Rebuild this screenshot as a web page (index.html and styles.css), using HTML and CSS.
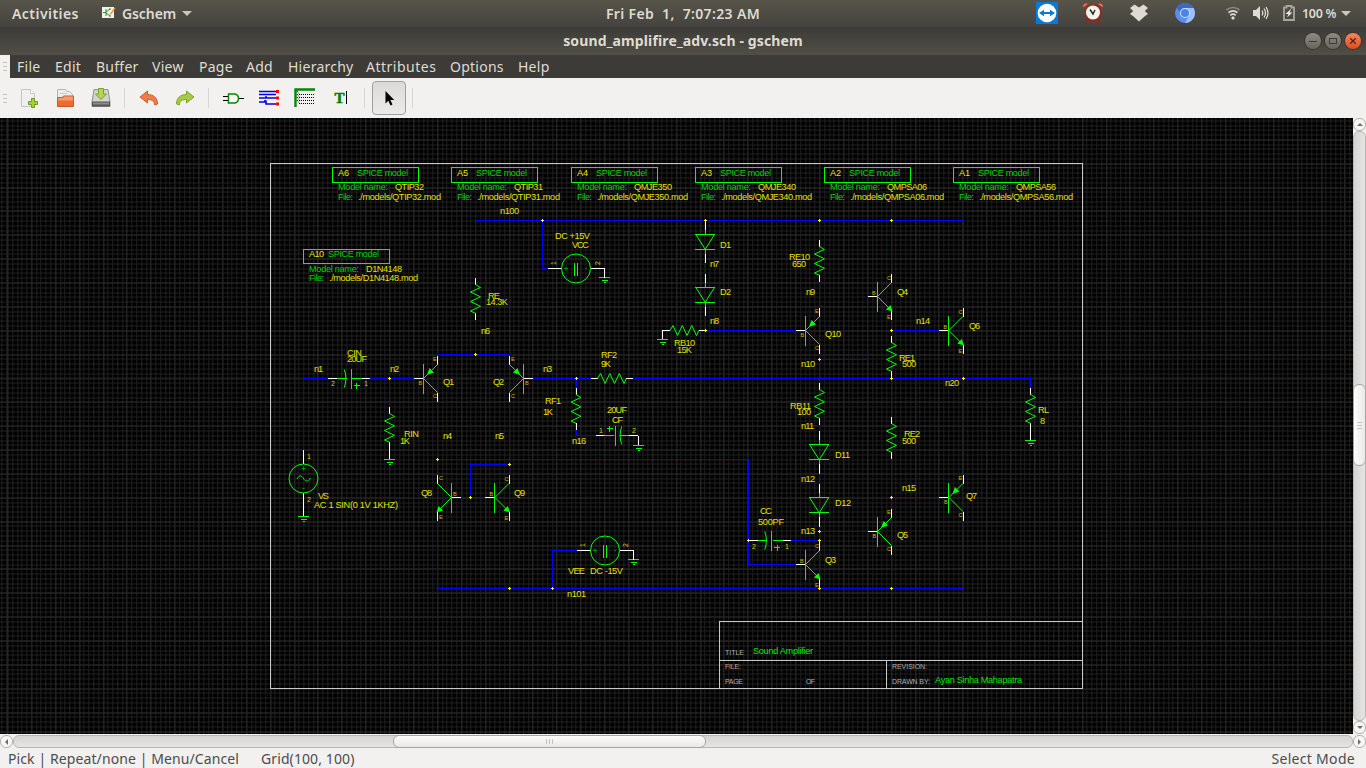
FILE: index.html
```html
<!DOCTYPE html>
<html lang="en">
<head>
<meta charset="utf-8">
<title>sound_amplifire_adv.sch - gschem</title>
<link rel="stylesheet" href="styles.css">
</head>
<body>
<header class="panel">
  <div class="panel-left">
    <span class="activities">Activities</span>
    <svg class="app-icon" width="14" height="14" viewBox="0 0 14 14"><rect x="0" y="1" width="12" height="11" fill="#f3f3ee"/><path d="M1 6.500h3M4 3v7M4 6l4-3M4 7l4 3M8 2v2M8 9v2" stroke="#3a8a2a" fill="none"/><path d="M7.500 8.500 12.500 1.500 13.500 2.500 9 8.500z" fill="#e88a2c"/></svg>
    <span class="app-name">Gschem</span>
    <i class="caret"></i>
  </div>
  <div class="clock">Fri Feb&nbsp; 1,&nbsp; 7:07:23 AM</div>
  <div class="panel-right">
    <svg class="ic-tv" width="22" height="22" viewBox="0 0 22 22"><rect width="22" height="22" fill="#0a7ad8"/><circle cx="11" cy="11" r="9.300" fill="#fff"/><path d="M3 11 8 7.800V10h6V7.800L19 11l-5 3.200V12H8v2.200z" fill="#0a7ad8"/></svg>
    <svg class="ic-alarm" width="22" height="22" viewBox="0 0 22 22"><path d="M1 6a3.800 3.800 0 0 1 5.500-4.500zM21 6a3.800 3.800 0 0 0-5.500-4.500z" fill="#e58a78" stroke="#a83524"/><path d="M5 17 4 21h3l2-2M17 17l1 4h-3l-2-2" fill="#8c2a1b"/><circle cx="11" cy="10.500" r="8.500" fill="#8f2d1e"/><circle cx="11" cy="10.500" r="7" fill="#f4f1ec"/><path d="M8 7.500 11 12 13 8" fill="none" stroke="#222" stroke-width="1.400"/></svg>
    <svg class="ic-drop" width="20" height="18" viewBox="0 0 20 18"><path d="M5.500 0.500 10 3.500 14.500 0.500 19 4 15.800 7 19 10 14.500 13 10 9.800 5.500 13 1 10 4.200 7 1 4z" fill="#dfdbd2"/><path d="M4.500 12.500 10 9 15.500 12.500 10 17.500z" fill="#dfdbd2"/><path d="M4.200 7 10 3.500 15.800 7 10 10.500z" fill="#dfdbd2"/></svg>
    <svg class="ic-chrome" width="20" height="20" viewBox="0 0 20 20"><circle cx="10" cy="10" r="10" fill="#5a8ef2"/><path d="M1.400 5A10 10 0 0 1 18.600 5H10a5 5 0 0 0-5 4z" fill="#3c68c8"/><path d="M10 5H18.600A10 10 0 0 1 10 20l4.500-8z" fill="#9cc0fa"/><circle cx="10" cy="10" r="5" fill="#d5e4fc"/><circle cx="10" cy="10" r="4" fill="#4b83ea"/></svg>
    <svg class="ic-wifi" width="16" height="14" viewBox="0 0 16 14"><g fill="none" stroke-width="1.700"><path d="M1.500 4Q8-1 14.500 4" stroke="#8c8a83"/><path d="M3.500 6.700Q8 3 12.500 6.700" stroke="#dfdbd2"/><path d="M5.300 9.300Q8 7 10.700 9.300" stroke="#dfdbd2"/></g><rect x="6.500" y="10.500" width="3" height="3" rx="1" fill="#dfdbd2"/></svg>
    <svg class="ic-vol" width="16" height="14" viewBox="0 0 16 14"><path d="M0 4h3l4-4v14l-4-4H0z" fill="#dfdbd2"/><path d="M9 4.500q1.500 2.500 0 5M11 2.500q3 4.500 0 9M13 1q4 6 0 12" fill="none" stroke="#dfdbd2" stroke-width="1.300"/></svg>
    <svg class="ic-bat" width="12" height="16" viewBox="0 0 12 16"><path d="M1 2.500h2.500V1h5v1.500H11V15H1z" fill="none" stroke="#a9a69d" stroke-width="1.800"/><path d="M8.500 3.500 2.500 9h3L4 12.500 9.500 7.500H6.500z" fill="#eeeae1"/></svg>
    <span class="pct">100 %</span>
    <i class="caret"></i>
  </div>
</header>

<div class="titlebar">
  <span class="title">sound_amplifire_adv.sch - gschem</span>
  <div class="winbtns">
    <span class="wb"><svg width="16" height="16" viewBox="0 0 16 16"><path d="M4 8.500h8" stroke="#3c3b37"/></svg></span>
    <span class="wb"><svg width="16" height="16" viewBox="0 0 16 16"><rect x="4.500" y="5.500" width="7" height="5" fill="none" stroke="#3c3b37"/></svg></span>
    <span class="wb close"><svg width="16" height="16" viewBox="0 0 16 16"><path d="M5.200 5.200l5.600 5.600M10.800 5.200l-5.600 5.600" stroke="#46291d" stroke-width="1.300"/></svg></span>
  </div>
</div>

<div class="menurow">
  <div class="grip"><i></i><i></i><i></i></div>
  <nav class="menubar">
    <span>File</span><span>Edit</span><span>Buffer</span><span>View</span><span>Page</span><span>Add</span><span>Hierarchy</span><span>Attributes</span><span>Options</span><span>Help</span>
  </nav>
</div>

<div class="toolbar">
  <div class="grip"><i></i><i></i><i></i></div>
  <span class="tool"><svg width="20" height="20" viewBox="0 0 20 20"><path d="M2.500 1.500h9l4 4v13h-13z" fill="#f0f0ee" stroke="#c4c4c0"/><path d="M11.500 1.500v4h4" fill="#fff" stroke="#c9c9c5"/><path d="M12.500 10.500h3v3h3v3h-3v3h-3v-3h-3v-3h3z" fill="#a4cf3c" stroke="#6c9c1c"/></svg></span>
  <span class="tool"><svg width="20" height="20" viewBox="0 0 20 20"><path d="M2.500 17V1.500h8l1 2h3l3 3V17z" fill="#eeedeb" stroke="#b9b6b0"/><path d="M5 5.500h7" stroke="#ccc"/><path d="M2.500 18.500v-9h5l1-1.500h10v10.500z" fill="#ee6a35" stroke="#d2552a"/><path d="M3 12.500v-2.500h5l1-1.500h9v4z" fill="#f49a6e"/></svg></span>
  <span class="tool"><svg width="20" height="20" viewBox="0 0 20 20"><path d="M3 1.500h14l2 12.500v4.500H1V14z" fill="#d2d2d0" stroke="#929290"/><path d="M1 13.500h18v5H1z" fill="#555753"/><path d="M2 14.500h16v2H2z" fill="#8b8d89"/><path d="M7.500 0.500h5V6h3L10 11.500 4.500 6h3z" fill="#afd552" stroke="#7ba428"/></svg></span>
  <span class="sep"></span>
  <span class="tool"><svg width="20" height="20" viewBox="0 0 20 20"><path d="M1 9 8.500 3v3.500c6 0 10 3.500 10 9.500l-3 .8c0-3.500-2.500-5.300-7-5.300V15z" fill="#ef7d4c" stroke="#d5582a"/></svg></span>
  <span class="tool"><svg width="20" height="20" viewBox="0 0 20 20"><path d="M19 9 11.500 3v3.500c-6 0-10 3.500-10 9.500l3 .8c0-3.500 2.500-5.300 7-5.300V15z" fill="#a6ca45" stroke="#7ba428"/></svg></span>
  <span class="sep"></span>
  <span class="tool"><svg width="22" height="20" viewBox="0 0 22 20"><path d="M1 8.500h5M1 12.500h5M17 10.500h5" stroke="#000"/><path d="M6.500 6H13q3.500 1 3.500 4.500T13 15H6.500z" fill="#fff" stroke="#008800" stroke-width="1.500"/></svg></span>
  <span class="tool"><svg width="22" height="20" viewBox="0 0 22 20"><path d="M1 3.500h17M1 6.500h17M1 10h7v-2M7 10h11M1 14h6v-2M8 12.500v3.500h10" fill="none" stroke="#0000e6" stroke-width="1.600"/><path d="M18 2h3v3h-3zM18 8.500h3v3h-3zM18 14.500h3v3h-3z" fill="red"/></svg></span>
  <span class="tool"><svg width="22" height="20" viewBox="0 0 22 20"><path d="M1.500 19V1.500H21" fill="none" stroke="#008800" stroke-width="2.400"/><path d="M3 3l3 4M3 6l3 4M3 9l3 4M3 12l3 4" stroke="#000" stroke-dasharray="1 1"/><path d="M5 6.500h16M5 9.500h16M5 12.500h16M5 15.500h16" stroke="#000" stroke-dasharray="1 1"/></svg></span>
  <span class="tool"><svg width="20" height="20" viewBox="0 0 20 20"><text class="t-icon" x="3.500" y="15">T</text><path d="M15.500 3v13" stroke="#000"/></svg></span>
  <span class="sep"></span>
  <span class="tool active"><svg width="20" height="20" viewBox="0 0 20 20"><path d="M6.500 3v12.500l2.800-2.700 2.200 4.700 2-1-2.100-4.500h3.800z" fill="#000"/></svg></span>
  <span class="sep"></span>
</div>

<main class="work">
<svg class="canvas" width="1353" height="616" viewBox="0 118 1353 616">
<defs>
  <g id="res"><path class="pin" d="M0 0V6.500M0 35.300V42"/><path class="sym" d="M0 6.500 5 9.500-5 14 5 18.800-5 23.500 5 28.300-5 33 0 35.300"/></g>
  <g id="gnd"><path class="sym crisp" d="M-5.500 0H5.500M-3 3H3M-1 5H1"/></g>
  <g id="cap"><path class="pin" d="M0 0H9M34 0H42"/><path class="sym crisp" d="M9 0H18.500M24 0H34M23-10V10M25.500 7H31.500M28.500 4V10"/><path class="sym" d="M16.300-9Q19.500 0 16.300 9"/></g>
  <g id="dio"><path class="pin" d="M0 0V9M0 33V42.500"/><path class="sym crisp" d="M0 9V13.500M0 28.800V33M-10.500 13.500H9.500M-10.500 28.800H9.500"/><path class="sym" d="M-10 13.500-.3 28.800 9.300 13.500"/></g>
  <g id="bjt"><path class="pin" d="M-9.500 0H0M14.330-14V-23M14.330 14V23.500"/><path class="sym crisp" d="M0-14.500V15"/><path class="sym" d="M0 0 14-14M0 0 14 14"/></g>
  <g id="npn"><use href="#bjt"/><path class="fill" d="M15 15 8.500 13 13 8.500z"/></g>
  <g id="pnp"><use href="#bjt"/><path class="fill" d="M3.500-3.500 6-10.500 10.500-6z"/></g>
  <g id="src"><path class="pin" d="M-28 0H-14M14.500 0H28.500V9"/><circle class="sym" r="14.500"/><path class="sym crisp" d="M-2-6V7M1-6V7"/><path class="faint" d="M-12 0h4M-10-2v4M9.500 0h1.500"/></g>
  <g id="node"><path class="node" d="M-1.500 0H1.500M0-1.500V1.500"/></g>
  <g id="nl"><text x="-5.500" y="-2">B</text><text x="9.500" y="-16.500">C</text><text x="9.500" y="22">E</text></g>
  <g id="pl"><text x="-5" y="6">B</text><text x="9.500" y="-18">E</text><text x="9.500" y="19.500">C</text></g>
  <g id="nlm"><text x="1.500" y="-2">B</text><text x="-12.500" y="-17.500">C</text><text x="-12.500" y="21.500">E</text></g>
  <g id="plm"><text x="1.500" y="6">B</text><text x="-12.500" y="-18">E</text><text x="-12.500" y="19.500">C</text></g>
</defs>

<!-- sheet border and title block -->
<path class="frame" d="M270.500 163.500H1082.500V688.500H270.500ZM719.500 688.500V621.500H1082.500M719.500 660.500H1082.500M886.500 660.500V688.500"/>
<g class="tb">
  <text x="725" y="655" textLength="19">TITLE</text><text x="725" y="669" textLength="16">FILE:</text><text x="725" y="684" textLength="18">PAGE</text><text x="806" y="684" textLength="9">OF</text><text x="892" y="669" textLength="35">REVISION:</text><text x="892" y="684" textLength="38">DRAWN BY:</text>
</g>
<g class="gt bright"><text x="753" y="654" textLength="60">Sound Amplifier</text><text x="935" y="683" textLength="87">Ayan Sinha Mahapatra</text></g>

<!-- nets -->
<path class="net" d="M475.500 279V220.500H963.500V308M475.500 319V354.500M542.500 220.500V268.500H549M819.500 220.500V241M891.500 220.500V275M819.500 281V308M705.500 263V274M705.500 316V330.500H797M819.500 353V384M819.500 359.500H867.500V296.500M891.500 319V337M891.500 330.500H940M963.500 353V475M891.500 378.500V418M633 378.500H1030.500V389M532 378.500H592M576.500 378.500V389M576.500 429V435.500H597M819.500 424V432M819.500 473V485M819.500 526V541M819.500 531.500H869M891.500 458V509M891.500 497.500H940M963.500 520V588.500H437.500V520M891.500 554V588.500M509.500 520V588.500M552.500 588.500V550.500H577M437.500 401V475M437.500 459.500H748.500V564.500H797M790 540.500H819.500M509.500 401V475M509.500 464.500H470.500V497.500M461 497.500H486M437.500 354.500H509.500M303.500 451V378.500H329M369 378.500H415M389.500 378.500V408"/>

<use href="#res" x="475.500" y="278"/><use href="#res" x="819.500" y="240"/><use href="#res" x="891.500" y="336"/><use href="#res" x="891.500" y="417"/><use href="#res" x="819.500" y="383"/><use href="#res" x="389.500" y="407"/><use href="#res" x="1030.500" y="388"/><use href="#res" x="576" y="388"/>
<use href="#res" transform="translate(591 378.500) rotate(-90)"/><use href="#res" transform="translate(663.500 330.500) rotate(-90)"/>
<path class="pin" d="M664 330.500H662.500V339M389.500 448V459M1030.500 429V440M638.500 435.500V445M303.500 450V464M303.500 493V516M819.500 587V588"/>
<use href="#gnd" x="662.500" y="339.500"/><use href="#gnd" x="604.500" y="277.500"/><use href="#gnd" x="389.500" y="459.500"/><use href="#gnd" x="303.500" y="516.500"/><use href="#gnd" x="638.500" y="445.500"/><use href="#gnd" x="1030.500" y="440.500"/><use href="#gnd" x="633.500" y="559.500"/>
<use href="#cap" x="328" y="378.500"/><use href="#cap" x="748.500" y="540.500"/><use href="#cap" transform="translate(638 435.500) rotate(180)"/>
<use href="#dio" x="705.500" y="220.500"/><use href="#dio" x="705.500" y="273.500"/><use href="#dio" x="819.500" y="431"/><use href="#dio" x="819.500" y="484"/>
<use href="#src" x="576" y="268.500"/><use href="#src" x="605" y="550.500"/>
<circle class="sym" cx="303.500" cy="478.500" r="14.500"/><path class="sym" d="M297 479C299 474.500 302 475.500 303.500 478.500S308 482.500 310.500 478"/><path class="faint" d="M301.500 468.500h4M303.500 466.500v4M302.500 488.500h2"/>
<use href="#npn" x="877.500" y="296.500"/><use href="#npn" x="948.900" y="330.500"/><use href="#npn" x="805.500" y="564.500"/><use href="#npn" x="494.900" y="497.500"/>
<use href="#pnp" x="805.500" y="330.500"/><use href="#pnp" x="877.500" y="531.500"/><use href="#pnp" x="948.900" y="497.500"/><use href="#pnp" x="423.500" y="378.500"/>
<use href="#npn" transform="translate(451.500 497.500) scale(-1 1)"/><use href="#pnp" transform="translate(523.500 378.500) scale(-1 1)"/>

<g class="bce">
  <use href="#nl" x="877.500" y="296.500"/><use href="#nl" x="949" y="330.500"/><use href="#nl" x="805.500" y="564.500"/><use href="#nl" x="495" y="497.500"/>
  <use href="#pl" x="805.500" y="330.500"/><use href="#pl" x="877.500" y="531.500"/><use href="#pl" x="949" y="497.500"/><use href="#pl" x="423.500" y="378.500"/>
  <use href="#nlm" x="451.500" y="497.500"/><use href="#plm" x="523.500" y="378.500"/>
</g>

<use href="#node" x="542.500" y="220.500"/><use href="#node" x="705.500" y="220.500"/><use href="#node" x="819.500" y="220.500"/><use href="#node" x="891.500" y="220.500"/><use href="#node" x="705.500" y="330.500"/><use href="#node" x="475.500" y="354.500"/><use href="#node" x="389.500" y="378.500"/><use href="#node" x="576.500" y="378.500"/><use href="#node" x="819.500" y="359.500"/><use href="#node" x="891.500" y="330.500"/><use href="#node" x="891.500" y="378.500"/><use href="#node" x="963.500" y="378.500"/><use href="#node" x="437.500" y="459.500"/><use href="#node" x="509.500" y="464.500"/><use href="#node" x="470.500" y="497.500"/><use href="#node" x="509.500" y="588.500"/><use href="#node" x="552.500" y="588.500"/><use href="#node" x="819.500" y="588.500"/><use href="#node" x="891.500" y="588.500"/><use href="#node" x="748.500" y="540.500"/><use href="#node" x="819.500" y="540.500"/><use href="#node" x="819.500" y="531.500"/><use href="#node" x="891.500" y="497.500"/>

<!-- SPICE model blocks -->
<path class="sym crisp" d="M332.500 167.500h86v15h-86zM451.500 167.500h86v15h-86zM571.500 167.500h86v15h-86zM695.500 167.500h86v15h-86zM824.500 167.500h86v15h-86zM953.500 167.500h86v15h-86zM303.500 249.500h86v14h-86z"/>
<g class="gt">
  <text x="357" y="176" textLength="51">SPICE model</text><text x="338" y="190" textLength="50">Model name:</text><text x="338" y="200" textLength="15">File:</text>
  <text x="476" y="176" textLength="51">SPICE model</text><text x="457" y="190" textLength="50">Model name:</text><text x="457" y="200" textLength="15">File:</text>
  <text x="596" y="176" textLength="51">SPICE model</text><text x="577" y="190" textLength="50">Model name:</text><text x="577" y="200" textLength="15">File:</text>
  <text x="720" y="176" textLength="51">SPICE model</text><text x="701" y="190" textLength="50">Model name:</text><text x="701" y="200" textLength="15">File:</text>
  <text x="849" y="176" textLength="51">SPICE model</text><text x="830" y="190" textLength="50">Model name:</text><text x="830" y="200" textLength="15">File:</text>
  <text x="978" y="176" textLength="51">SPICE model</text><text x="959" y="190" textLength="50">Model name:</text><text x="959" y="200" textLength="15">File:</text>
  <text x="328" y="257" textLength="51">SPICE model</text><text x="309" y="272" textLength="50">Model name:</text><text x="309" y="281" textLength="15">File:</text>
</g>
<g class="yt">
  <text x="338" y="176" textLength="11">A6</text><text x="395" y="190" textLength="29">QTIP32</text><text x="358" y="200" textLength="83">./models/QTIP32.mod</text>
  <text x="457" y="176" textLength="11">A5</text><text x="514" y="190" textLength="29">QTIP31</text><text x="477" y="200" textLength="83">./models/QTIP31.mod</text>
  <text x="577" y="176" textLength="11">A4</text><text x="634" y="190" textLength="38">QMJE350</text><text x="597" y="200" textLength="91">./models/QMJE350.mod</text>
  <text x="701" y="176" textLength="11">A3</text><text x="758" y="190" textLength="38">QMJE340</text><text x="721" y="200" textLength="91">./models/QMJE340.mod</text>
  <text x="830" y="176" textLength="11">A2</text><text x="887" y="190" textLength="40">QMPSA06</text><text x="850" y="200" textLength="94">./models/QMPSA06.mod</text>
  <text x="959" y="176" textLength="11">A1</text><text x="1016" y="190" textLength="40">QMPSA56</text><text x="979" y="200" textLength="94">./models/QMPSA56.mod</text>
  <text x="309" y="257" textLength="15">A10</text><text x="366" y="272" textLength="36">D1N4148</text><text x="329" y="281" textLength="89">./models/D1N4148.mod</text>

  <text x="500" y="214" textLength="19">n100</text><text x="555" y="239" textLength="35">DC +15V</text><text x="572" y="248" textLength="17">VCC</text>
  <text x="488" y="299" textLength="12">RE</text><text x="486" y="305" textLength="22">14.3K</text><text x="481" y="334" textLength="9">n6</text>
  <text x="720" y="248" textLength="11">D1</text><text x="710" y="267" textLength="9">n7</text><text x="720" y="295" textLength="11">D2</text><text x="710" y="324" textLength="9">n8</text>
  <text x="674" y="346" textLength="21">RB10</text><text x="677" y="353" textLength="15">15K</text>
  <text x="789" y="260" textLength="21">RE10</text><text x="792" y="267" textLength="14">650</text><text x="806" y="295" textLength="9">n9</text><text x="825" y="337" textLength="16">Q10</text>
  <text x="897" y="295" textLength="11">Q4</text><text x="916" y="324" textLength="14">n14</text><text x="969" y="329" textLength="11">Q6</text>
  <text x="314" y="372" textLength="9">n1</text><text x="347" y="356" textLength="15">CIN</text><text x="347" y="362" textLength="20">20UF</text><text x="390" y="372" textLength="9">n2</text>
  <text x="443" y="385" textLength="11">Q1</text><text x="493" y="385" textLength="11">Q2</text><text x="543" y="372" textLength="9">n3</text>
  <text x="404" y="437" textLength="15">RIN</text><text x="400" y="444" textLength="10">1K</text><text x="443" y="439" textLength="9">n4</text><text x="495" y="439" textLength="9">n5</text>
  <text x="421" y="496" textLength="11">Q8</text><text x="514" y="496" textLength="11">Q9</text><text x="318" y="499" textLength="11">VS</text><text x="314" y="508" textLength="84">AC 1 SIN(0 1V 1KHZ)</text>
  <text x="601" y="358" textLength="16">RF2</text><text x="601" y="367" textLength="10">9K</text><text x="545" y="404" textLength="16">RF1</text><text x="543" y="415" textLength="10">1K</text>
  <text x="607" y="413" textLength="20">20UF</text><text x="612" y="423" textLength="11">CF</text><text x="572" y="444" textLength="14">n16</text>
  <text x="801" y="367" textLength="14">n10</text><text x="899" y="361" textLength="16">RE1</text><text x="902" y="367" textLength="14">500</text><text x="945" y="386" textLength="14">n20</text>
  <text x="790" y="409" textLength="21">RB11</text><text x="797" y="415" textLength="14">100</text><text x="801" y="429" textLength="13">n11</text><text x="835" y="458" textLength="15">D11</text>
  <text x="904" y="437" textLength="16">RE2</text><text x="902" y="444" textLength="14">500</text><text x="1038" y="413" textLength="11">RL</text><text x="1040" y="424">8</text>
  <text x="801" y="482" textLength="14">n12</text><text x="835" y="506" textLength="16">D12</text><text x="760" y="514" textLength="12">CC</text><text x="758" y="525" textLength="26">500PF</text><text x="801" y="534" textLength="14">n13</text>
  <text x="902" y="491" textLength="14">n15</text><text x="966" y="499" textLength="11">Q7</text><text x="897" y="538" textLength="11">Q5</text><text x="825" y="563" textLength="11">Q3</text>
  <text x="568" y="574" textLength="17">VEE</text><text x="590" y="574" textLength="33">DC -15V</text><text x="567" y="597" textLength="19">n101</text>
</g>
<g class="pn">
  <text x="307" y="459">1</text><text x="307" y="502">2</text><text x="331" y="386">2</text><text x="364" y="386">1</text><text x="599" y="433">1</text><text x="632" y="433">2</text><text x="752" y="549">2</text><text x="785" y="549">1</text>
  <text transform="translate(556 265) rotate(-90)">1</text><text transform="translate(600 265) rotate(-90)">2</text><text transform="translate(585 547) rotate(-90)">1</text><text transform="translate(628 547) rotate(-90)">2</text>
</g>
</svg>
<div class="vscroll"><span class="btn"><i class="up"></i></span><span class="vtrack"><span class="vthumb"><i></i><i></i><i></i></span></span><span class="btn"><i class="down"></i></span></div>
</main>
<div class="hscroll"><span class="btn"><i class="left"></i></span><span class="htrack"><span class="hthumb"><i></i><i></i><i></i></span></span><span class="btn"><i class="right"></i></span></div>
<footer class="status"><span class="s1">Pick | Repeat/none | Menu/Cancel</span><span class="s2">Grid(100, 100)</span><span class="s3">Select Mode</span></footer>
</body>
</html>
```
FILE: styles.css
```css
* { box-sizing: border-box; }
html, body { margin: 0; height: 768px; overflow: hidden; }
body { width: 1366px; display: flex; flex-direction: column; background: #f2f1f0; font-family: "Noto Sans", "Open Sans", sans-serif; font-size: 14px; }
svg { display: block; flex: none; }

.panel { height: 27px; flex: none; display: grid; grid-template-columns: 1fr auto 1fr; align-items: center; background: linear-gradient(#57544a, #44433d); color: #dfdbd2; font-weight: 600; font-size: 14px; }
.panel > * { padding-bottom: 1px; }
.panel-left { display: flex; align-items: center; padding-left: 12px; }
.activities { width: 90px; letter-spacing: .45px; }
.app-name { margin-left: 6px; width: 60px; letter-spacing: -.1px; }
.caret { width: 0; height: 0; border: 5px solid transparent; border-top-color: #cbc7be; border-bottom: 0; }
.clock { white-space: nowrap; letter-spacing: .35px; }
.panel-right { display: flex; align-items: center; justify-content: flex-end; padding-right: 15px; }
.ic-alarm { margin-left: 24px; }
.ic-drop { margin-left: 25px; }
.ic-chrome { margin-left: 26px; }
.ic-wifi { margin-left: 30px; }
.ic-vol { margin-left: 12px; }
.ic-bat { margin-left: 14px; }
.pct { font-size: 12.5px; margin-left: 7px; width: 36px; white-space: nowrap; letter-spacing: -.3px; }
.pct + .caret { margin-left: 3px; }

.titlebar { height: 28px; flex: none; display: grid; grid-template-columns: 66px 1fr 66px; align-items: center; background: linear-gradient(#3c3b37, #504e46); }
.title { grid-column: 2; text-align: center; color: #dfdbd2; font-weight: 700; font-size: 14px; letter-spacing: .13px; padding-bottom: 2px; }
.winbtns { display: flex; gap: 4px; padding-left: 5px; }
.wb { width: 16px; height: 16px; border-radius: 50%; background: linear-gradient(#8e8b83, #67655e); box-shadow: 0 0 0 1px #36352f; }
.wb.close { background: linear-gradient(#f58660, #e04c1c); }

.menurow { height: 23px; flex: none; display: flex; }
.grip { width: 10px; flex: none; display: flex; flex-direction: column; justify-content: center; gap: 3px; padding-left: 3px; }
.grip i { width: 4px; height: 1px; background: #c5c3c0; }
.menubar { flex: 1; background: #3c3b37; color: #dfdbd2; display: flex; align-items: center; padding-left: 7px; font-size: 14px; letter-spacing: .25px; }
.menubar span { width: 38px; white-space: nowrap; }
.menubar span:nth-child(2) { width: 41px; }
.menubar span:nth-child(3) { width: 56px; }
.menubar span:nth-child(4), .menubar span:nth-child(5) { width: 47px; }
.menubar span:nth-child(6) { width: 42px; }
.menubar span:nth-child(7) { width: 78px; }
.menubar span:nth-child(8) { width: 84px; }
.menubar span:nth-child(8) { letter-spacing: .5px; }
.menubar span:nth-child(9) { width: 68px; }

.toolbar { height: 40px; flex: none; display: flex; align-items: center; background: #f2f1f0; }
.toolbar .grip { width: 11px; }
.tool { width: 36px; height: 34px; display: flex; align-items: center; justify-content: center; }
.tool.active { width: 34px; margin: 0 1px; border: 1px solid #a19f9b; border-radius: 4px; background: linear-gradient(#dcdad8, #ebeae8); }
.sep { width: 12px; height: 20px; background: linear-gradient(#d9d7d4, #d9d7d4) 5px 0 / 1px 20px no-repeat; }
.t-icon { font: bold 15px "Liberation Serif", serif; fill: #008000; stroke: #008000; stroke-width: .5px; }

.work { height: 616px; flex: none; display: flex; }
.canvas {
  background:
    repeating-linear-gradient(to right, #262626 0 1px, transparent 1px 23.882px) 7.300px 0,
    repeating-linear-gradient(to bottom, #262626 0 1px, transparent 1px 23.864px) 0 -2.500px,
    repeating-linear-gradient(to right, #202020 0 1px, transparent 1px 4.7765px) 7.300px 0,
    repeating-linear-gradient(to bottom, #202020 0 1px, transparent 1px 4.7727px) 0 -2.500px,
    #000;
}
.net, .pin, .sym, .frame, .faint, .node { fill: none; stroke-width: 1px; }
.net, .pin, .frame, .crisp, .node { shape-rendering: crispEdges; }
.net { stroke: #0000ff; }
.pin { stroke: #ffffff; }
.sym { stroke: #00ff00; }
.fill { fill: #00ff00; }
.faint { stroke: #009000; }
.frame { stroke: #c8c8c8; }
.node { stroke: #ffff00; }
.canvas text { font-family: "Liberation Sans", sans-serif; font-size: 9.200px; }
.canvas .yt text { fill: #e4e000; }
.canvas .gt text { fill: #00d000; }
.canvas .bright text { fill: #00e600; }
.canvas .tb text { fill: #b0b0b0; font-size: 7px; }
.canvas .pn text { fill: #d8cc00; font-size: 7px; }
.bce { fill: #d0b400; }
.canvas #nl text, .canvas #pl text, .canvas #nlm text, .canvas #plm text { font-size: 5.500px; }

.btn { width: 13px; height: 13px; flex: none; display: flex; align-items: center; justify-content: center; border: 1px solid #b5b2ae; border-radius: 6px; background: #f7f6f5; }
.btn i { border: 3px solid transparent; }
.btn .up { border-bottom-color: #6e6c68; border-top: 0; }
.btn .down { border-top-color: #6e6c68; border-bottom: 0; }
.btn .left { border-right-color: #6e6c68; border-left: 0; }
.btn .right { border-left-color: #6e6c68; border-right: 0; }
.vscroll { width: 13px; display: flex; flex-direction: column; }
.vtrack { flex: 1; border: 1px solid #b9b6b2; border-radius: 6px; background: linear-gradient(to right, #d7d5d3, #e5e4e2); padding-top: 252px; }
.vthumb { height: 82px; margin: 0 -1px; display: flex; flex-direction: column; gap: 2px; align-items: center; justify-content: center; border: 1px solid #a8a5a1; border-radius: 6px; background: linear-gradient(to right, #fdfdfd, #e9e8e6); }
.vthumb i { width: 5px; height: 1px; background: #c4c1bd; }
.hscroll { height: 14px; padding-top: 1px; flex: none; display: flex; }
.htrack { flex: 1; height: 13px; border: 1px solid #b9b6b2; border-radius: 6px; background: linear-gradient(#d7d5d3, #e5e4e2); padding-left: 379px; }
.hthumb { width: 313px; height: 13px; margin-top: -1px; display: flex; gap: 2px; align-items: center; justify-content: center; border: 1px solid #a8a5a1; border-radius: 6px; background: linear-gradient(#fdfdfd, #e9e8e6); }
.hthumb i { width: 1px; height: 5px; background: #c4c1bd; }
.status { flex: 1; display: flex; align-items: center; padding: 0 11px 0 8px; color: #4c4c4c; font-size: 14px; letter-spacing: .1px; }
.s1 { width: 253px; white-space: nowrap; }
.s3 { margin-left: auto; letter-spacing: .3px; }
```
